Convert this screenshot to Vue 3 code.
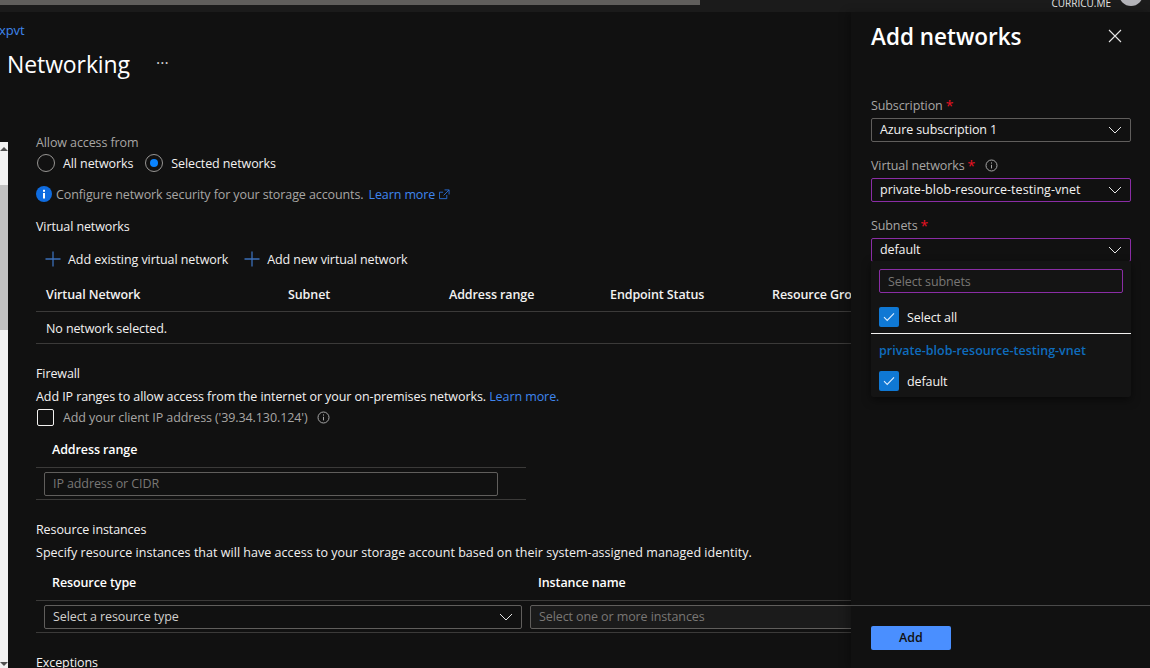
<template>
  <div class="page">
    <div class="topbar">
      <div class="top-scroll"></div>
      <div class="account">CURRICU.ME</div>
      <div class="avatar"></div>
    </div>

    <div class="blade">
      <a class="crumb">xpvt</a>
      <div class="title-row">
        <h1>Networking</h1>
        <span class="more">···</span>
      </div>

      <div class="blade-body">
        <div class="scrollbar">
          <span class="arrow up"></span>
          <div class="thumb"></div>
          <span class="arrow down"></span>
        </div>

        <div class="content">
          <div class="muted allow">Allow access from</div>
          <div class="radios">
            <label class="radio"><span class="dot"></span>All networks</label>
            <label class="radio"><span class="dot on"></span>Selected networks</label>
          </div>

          <div class="info muted">
            <svg width="16" height="16" viewBox="0 0 16 16">
              <circle cx="8" cy="8" r="8" fill="#0f6ce0" />
              <rect x="7" y="7" width="2" height="5.5" fill="#fff" />
              <rect x="7" y="3.8" width="2" height="2" fill="#fff" />
            </svg>
            <span>Configure network security for your storage accounts.</span>
            <a class="link">Learn more</a>
            <svg width="11" height="11" viewBox="0 0 12 12" fill="none" stroke="#2a6fd6">
              <path d="M8.5 6.5v4h-8v-7h4M6 1h5v5M11 1 5 7" />
            </svg>
          </div>

          <div class="heading vnet-heading">Virtual networks</div>
          <div class="actions">
            <button v-for="a in actions" :key="a" class="action">
              <svg width="16" height="16" viewBox="0 0 16 16" stroke="#3b6fb8" stroke-width="1.3">
                <path d="M8 0.5v15M0.5 8h15" />
              </svg>
              {{ a }}
            </button>
          </div>

          <div class="vnet-table">
            <div class="vnet-head">
              <span v-for="c in columns" :key="c">{{ c }}</span>
            </div>
            <div class="vnet-empty">No network selected.</div>
          </div>

          <div class="heading firewall-heading">Firewall</div>
          <div class="desc">
            Add IP ranges to allow access from the internet or your on-premises networks.
            <a class="link">Learn more.</a>
          </div>
          <label class="client-ip muted">
            <span class="check-box"></span>
            Add your client IP address ('39.34.130.124')
            <svg class="tip" width="13" height="13" viewBox="0 0 13 13" fill="none" stroke="#a6a6a6">
              <circle cx="6.5" cy="6.5" r="5.5" />
              <path d="M6.5 5.8v3.6M6.5 3.4v1.2" />
            </svg>
          </label>

          <div class="range">
            <div class="col-head">Address range</div>
            <div class="range-cell">
              <div class="field placeholder">IP address or CIDR</div>
            </div>
          </div>

          <div class="heading res-heading">Resource instances</div>
          <div class="desc wide">Specify resource instances that will have access to your storage account based on their system-assigned managed identity.</div>
          <div class="res-grid">
            <div class="col-head">Resource type</div>
            <div class="col-head inst-head">Instance name</div>
          </div>
          <div class="res-row">
            <div class="field select-type">
              Select a resource type
              <svg class="chev" width="14" height="8" viewBox="0 0 14 8" fill="none" stroke="#e6e6e6"><path d="M1 1l6 6 6-6" /></svg>
            </div>
            <div class="field instances placeholder">Select one or more instances</div>
          </div>
          <div class="heading exc-heading">Exceptions</div>
        </div>
      </div>
    </div>

    <aside class="panel">
      <div class="panel-head">
        <h2>Add networks</h2>
        <svg width="14" height="14" viewBox="0 0 14 14" stroke="#e6e6e6" stroke-width="1.1">
          <path d="M1 1l12 12M13 1 1 13" />
        </svg>
      </div>

      <div class="form">
        <div class="p-label first">Subscription <i>*</i></div>
        <div class="p-select">
          Azure subscription 1
          <svg class="chev" width="14" height="8" viewBox="0 0 14 8" fill="none" stroke="#e6e6e6"><path d="M1 1l6 6 6-6" /></svg>
        </div>

        <div class="p-label">
          Virtual networks <i>*</i>
          <svg class="p-tip" width="13" height="13" viewBox="0 0 13 13" fill="none" stroke="#a6a6a6">
            <circle cx="6.5" cy="6.5" r="5.5" />
            <path d="M6.5 5.8v3.6M6.5 3.4v1.2" />
          </svg>
        </div>
        <div class="p-select active vnet-value">
          private-blob-resource-testing-vnet
          <svg class="chev" width="14" height="8" viewBox="0 0 14 8" fill="none" stroke="#e6e6e6"><path d="M1 1l6 6 6-6" /></svg>
        </div>

        <div class="p-label">Subnets <i>*</i></div>
        <div class="p-select active">
          default
          <svg class="chev" width="14" height="8" viewBox="0 0 14 8" fill="none" stroke="#e6e6e6"><path d="M1 1l6 6 6-6" /></svg>
        </div>

        <div class="dropdown">
          <div class="search">Select subnets</div>
          <div class="opt all">
            <span class="tick"><svg width="12" height="10" viewBox="0 0 12 10" fill="none" stroke="#dfeeff" stroke-width="1.1"><path d="M1 5.2 4.2 8.4 11 1.4" /></svg></span>
            Select all
          </div>
          <div class="group">private-blob-resource-testing-vnet</div>
          <div class="opt">
            <span class="tick"><svg width="12" height="10" viewBox="0 0 12 10" fill="none" stroke="#dfeeff" stroke-width="1.1"><path d="M1 5.2 4.2 8.4 11 1.4" /></svg></span>
            default
          </div>
        </div>
      </div>

      <div class="panel-foot">
        <button class="add">Add</button>
      </div>
    </aside>
  </div>
</template>

<script setup>
const actions = ['Add existing virtual network', 'Add new virtual network']
const columns = ['Virtual Network', 'Subnet', 'Address range', 'Endpoint Status', 'Resource Group']
</script>

<style>
html,
body {
  margin: 0;
  background: #111111;
}
</style>

<style scoped>
.page {
  position: relative;
  width: 1150px;
  height: 668px;
  overflow: hidden;
  background: #111111;
  color: #f3f2f1;
  font-family: "Open Sans", "Liberation Sans", sans-serif;
  font-size: 12.5px;
  letter-spacing: -0.1px;
}

.topbar {
  position: relative;
  height: 12px;
  background: #1b1b1b;
  overflow: hidden;
  display: flex;
  justify-content: flex-end;
}

.top-scroll {
  position: absolute;
  left: 0;
  top: 0;
  width: 700px;
  height: 5px;
  background: #605e5c;
}

.account {
  font-size: 10px;
  line-height: 12px;
  margin-top: -3px;
  letter-spacing: 0;
  color: #e6e6e6;
}

.avatar {
  width: 24px;
  height: 24px;
  margin: -18px 7px 0 8px;
  border-radius: 50%;
  background: #b3b3b8;
}

.blade {
  height: 656px;
  display: flex;
  flex-direction: column;
}

.crumb {
  margin: 10px 0 0 -1px;
  line-height: 16px;
  color: #3f86ee;
  font-size: 13px;
}

.title-row {
  display: flex;
  align-items: center;
  height: 32px;
  margin-top: 10px;
  padding-left: 7px;
}

h1 {
  margin: 0;
  font-size: 23px;
  font-weight: 400;
  letter-spacing: -0.1px;
  color: #fff;
}

.more {
  margin-left: 26px;
  margin-top: -3px;
  font-size: 16px;
  letter-spacing: 0;
  color: #d0d0d0;
}

.blade-body {
  display: flex;
  flex: 1;
  margin-top: 54px;
  min-height: 0;
}

.scrollbar {
  position: relative;
  flex: none;
  width: 8px;
  margin-top: 8px;
  background: #f1f1f1;
  padding-top: 43px;
  box-sizing: border-box;
}

.thumb {
  height: 145px;
  background: #c1c1c1;
}

.arrow {
  position: absolute;
  left: 0;
  border-left: 4px solid transparent;
  border-right: 4px solid transparent;
}

.arrow.up {
  top: 5px;
  border-bottom: 4px solid #505050;
}

.arrow.down {
  bottom: 2px;
  border-top: 4px solid #505050;
}

.content {
  flex: 1;
  min-width: 0;
  padding-left: 28px;
}

.muted {
  color: #a8a6a4;
}

.allow {
  height: 20px;
  line-height: 22px;
  margin-top: -2px;
}

.radios {
  display: flex;
  gap: 11px;
  height: 20px;
  margin-top: 1px;
}

.radio {
  display: flex;
  align-items: center;
  gap: 8px;
  padding-left: 1px;
}

.dot {
  width: 18px;
  height: 18px;
  border: 1px solid #979593;
  border-radius: 50%;
  box-sizing: border-box;
  position: relative;
}

.dot.on::after {
  content: "";
  position: absolute;
  inset: 4px;
  border-radius: 50%;
  background: #0a84ff;
}

.info {
  display: flex;
  align-items: center;
  height: 20px;
  margin-top: 11px;
  gap: 4px;
}

.info .link {
  margin-left: 1px;
}

.link {
  color: #3f86ee;
}

.heading {
  height: 20px;
  line-height: 22px;
  color: #f3f2f1;
}

.vnet-heading {
  margin-top: 12px;
}

.actions {
  display: flex;
  gap: 16px;
  margin-top: 13px;
  padding-left: 9px;
}

.action {
  display: flex;
  align-items: center;
  gap: 7px;
  height: 20px;
  padding: 0;
  border: 0;
  background: none;
  color: #f3f2f1;
  font: inherit;
  letter-spacing: -0.08px;
}

.vnet-table {
  margin-top: 15px;
  width: 900px;
}

.vnet-head {
  display: grid;
  grid-template-columns: 242px 161px 161px 162px 1fr;
  height: 28px;
  line-height: 22px;
  padding-left: 10px;
  border-bottom: 1px solid #3b3a39;
  font-weight: 600;
  box-sizing: border-box;
}

.vnet-empty {
  height: 31px;
  line-height: 34px;
  padding-left: 10px;
  border-bottom: 1px solid #3b3a39;
}

.firewall-heading {
  margin-top: 19px;
}

.desc {
  height: 20px;
  line-height: 22px;
  margin-top: 3px;
  letter-spacing: -0.08px;
}

.desc.wide {
  letter-spacing: 0.03px;
}

.client-ip {
  display: flex;
  align-items: center;
  height: 20px;
  margin-top: 1px;
}

.check-box {
  width: 17px;
  height: 17px;
  margin: 0 9px 0 1px;
  border: 1px solid #f3f2f1;
  border-radius: 2px;
  box-sizing: border-box;
}

.tip {
  margin-left: 9px;
}

.range {
  margin-top: 12px;
  width: 490px;
}

.col-head {
  font-weight: 600;
  line-height: 22px;
  padding-left: 16px;
  color: #fff;
}

.range .col-head {
  height: 28px;
  border-bottom: 1px solid #3b3a39;
}

.range-cell {
  height: 32px;
  padding: 4px 28px 0 8px;
  border-bottom: 1px solid #3b3a39;
  box-sizing: border-box;
}

.field {
  position: relative;
  height: 24px;
  line-height: 22px;
  padding-left: 8px;
  border: 1px solid #605e5c;
  border-radius: 2px;
  box-sizing: border-box;
}

.placeholder {
  color: #797775;
}

.res-heading {
  margin-top: 19px;
}

.res-grid {
  display: grid;
  grid-template-columns: 502px 1fr;
  height: 28px;
  margin-top: 10px;
  border-bottom: 1px solid #3b3a39;
  width: 900px;
}

.inst-head {
  padding-left: 0;
}

.res-row {
  display: flex;
  gap: 8px;
  height: 32px;
  padding: 4px 8px 0;
  width: 900px;
  border-bottom: 1px solid #3b3a39;
  box-sizing: border-box;
}

.select-type {
  flex: none;
  width: 478px;
  color: #d2d0ce;
}

.instances {
  flex: 1;
  background: #1b1b1b;
}

.chev {
  position: absolute;
  right: 8px;
  top: 7px;
}

.exc-heading {
  margin-top: 19px;
}

.panel {
  position: absolute;
  right: 0;
  top: 12px;
  bottom: 0;
  width: 299px;
  display: flex;
  flex-direction: column;
  background: #111111;
  box-shadow: -4px 0 8px rgba(0, 0, 0, 0.25);
}

.panel-head {
  display: flex;
  align-items: center;
  justify-content: space-between;
  height: 48px;
  padding: 0 28px 0 20px;
}

h2 {
  margin: 0;
  font-size: 22.5px;
  font-weight: 600;
  letter-spacing: 0;
  color: #fff;
}

.form {
  flex: 1;
  padding: 0 19px 0 20px;
}

.p-label {
  display: flex;
  align-items: center;
  gap: 3px;
  height: 20px;
  margin-top: 13px;
  color: #a8a6a4;
}

.p-label.first {
  margin-top: 35px;
}

.p-label i {
  color: #e81123;
  font-style: normal;
  font-size: 14px;
}

.p-tip {
  margin-left: 7px;
}

.p-select {
  position: relative;
  height: 24px;
  line-height: 22px;
  margin-top: 3px;
  padding-left: 8px;
  border: 1px solid #605e5c;
  border-radius: 2px;
  box-sizing: border-box;
}

.p-select.active {
  border-color: #8a2da5;
}

.vnet-value {
  letter-spacing: 0.05px;
}

.dropdown {
  position: relative;
  height: 136px;
  background: #141414;
  box-shadow: 0 3px 8px rgba(0, 0, 0, 0.5);
  border-radius: 2px;
  padding: 8px 0 0;
  box-sizing: border-box;
  margin-top: -1px;
}

.search {
  height: 24px;
  line-height: 24px;
  margin: 0 8px;
  padding-left: 8px;
  border: 1px solid #8a2da5;
  border-radius: 2px;
  box-sizing: border-box;
  color: #797775;
}

.opt {
  display: flex;
  align-items: center;
  gap: 8px;
  height: 20px;
  padding-left: 8px;
  margin-top: 14px;
}

.tick {
  display: flex;
  align-items: center;
  justify-content: center;
  width: 20px;
  height: 20px;
  background: #0f78d4;
  border-radius: 2px;
}

.group {
  margin-top: 6px;
  padding: 7px 8px 0;
  height: 26px;
  line-height: 20px;
  border-top: 1px solid #f3f2f1;
  color: #0f6cbd;
  font-weight: 600;
  letter-spacing: 0;
}

.group + .opt {
  margin-top: 4px;
}

.panel-foot {
  height: 63px;
  padding: 20px 0 0 20px;
  border-top: 1px solid #4a4a4a;
  box-sizing: border-box;
}

.add {
  width: 80px;
  height: 24px;
  padding: 0 0 2px;
  border: 0;
  border-radius: 2px;
  background: #4a8fff;
  color: #111;
  font: inherit;
  font-weight: 600;
  letter-spacing: 0;
}
</style>
